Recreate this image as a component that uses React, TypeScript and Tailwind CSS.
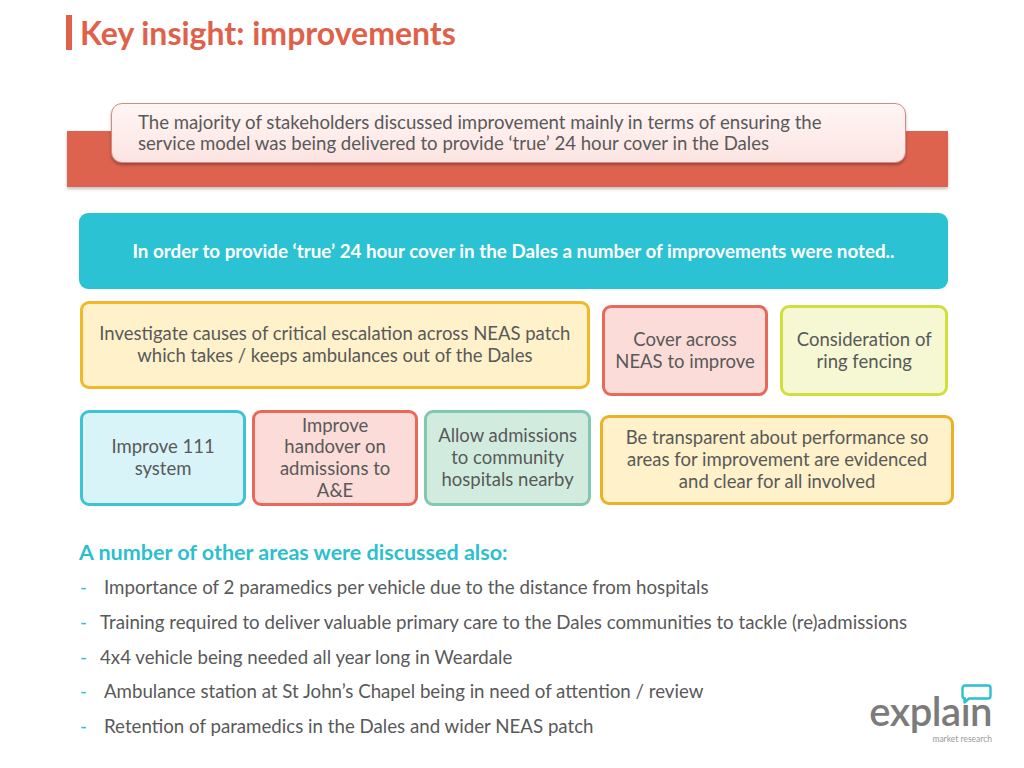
import React from 'react';

const FONT = { fontFamily: 'Lato, "Open Sans", "Liberation Sans", sans-serif' };

const BULLETS = [
    { text: 'Importance of 2 paramedics per vehicle due to the distance from hospitals', pad: 'pl-[24px]' },
    { text: 'Training required to deliver valuable primary care to the Dales communities to tackle (re)admissions', pad: 'pl-[20px]' },
    { text: '4x4 vehicle being needed all year long in Weardale', pad: 'pl-[20px]' },
    { text: 'Ambulance station at St John\u2019s Chapel being in need of attention / review', pad: 'pl-[24px]' },
    { text: 'Retention of paramedics in the Dales and wider NEAS patch', pad: 'pl-[24px]' },
];

function Box({ className, children }: Readonly<{ className: string; children: React.ReactNode }>) {
    return (
        <div
            className={`flex items-center justify-center rounded-[9px] border-[3px] px-1 text-center text-[18.5px] leading-[21.7px] text-[#595959] ${className}`}
        >
            {children}
        </div>
    );
}

function Logo() {
    return (
        <div className="flex flex-col items-end">
            <div className="relative">
                {/* the speech bubble stands in for the dot of the i */}
                <span className="text-[40px] font-semibold leading-[40px] tracking-[-0.5px] text-[#7b7b7b]">expla{'\u0131'}n</span>
                <svg
                    className="absolute right-[0px] top-[-7px]"
                    width="31"
                    height="20"
                    viewBox="0 0 31 20"
                    fill="none"
                    aria-hidden
                >
                    <path
                        d="M4 1.5 H27 a2.5 2.5 0 0 1 2.5 2.5 V12 a2.5 2.5 0 0 1 -2.5 2.5 H8 L3.5 18.5 V14.5 H4 a2.5 2.5 0 0 1 -2.5 -2.5 V4 a2.5 2.5 0 0 1 2.5 -2.5 Z"
                        stroke="#2bbfcf"
                        strokeWidth="2.4"
                        strokeLinejoin="round"
                    />
                </svg>
            </div>
            <span className="mt-[3px] text-[8.5px] leading-[9px] text-[#9a9a9a]">market research</span>
        </div>
    );
}

export default function App() {
    return (
        <div className="relative h-[768px] w-[1024px] overflow-hidden bg-white" style={FONT}>
            <header className="flex items-center gap-[8px] pl-[66px] pt-[15px]">
                <span className="h-[35px] w-[6px] bg-[#e0614a]" />
                <h1 className="text-[32px] font-bold leading-[35px] text-[#e0614a]">Key insight: improvements</h1>
            </header>

            <section className="mt-[53px] grid pl-[67px] pr-[76px]">
                <div className="col-start-1 row-start-1 mt-[28px] h-[56px] bg-[#dd634f] shadow-[0_2px_3px_rgba(0,0,0,0.25)]" />
                <div className="col-start-1 row-start-1 ml-[44px] mr-[42px] h-[60px] rounded-[11px] border border-[#d88a80] bg-gradient-to-b from-[#fff6f5] to-[#fbe4e1] pl-[26px] pt-[8px] text-[18.6px] leading-[21px] text-[#595959] shadow-[0_2px_3px_rgba(0,0,0,0.3)]">
                    <p>The majority of stakeholders discussed improvement mainly in terms of ensuring the</p>
                    <p>service model was being delivered to provide {'\u2018'}true{'\u2019'} 24 hour cover in the Dales</p>
                </div>
            </section>

            <section className="ml-[79px] mr-[76px] mt-[26px] flex h-[76px] items-center justify-center rounded-[9px] bg-[#2bc2d4] text-[18.8px] font-bold text-white">
                In order to provide {'\u2018'}true{'\u2019'} 24 hour cover in the Dales a number of improvements were noted..
            </section>

            <section className="ml-[80px] mr-[76px] mt-[12px] flex items-start gap-[12px]">
                <Box className="h-[88px] w-[511px] items-start pt-[19px] border-[#f1b92a] bg-[#fff1ca]">
                    Investigate causes of critical escalation across NEAS patch
                    <br />
                    which takes / keeps ambulances out of the Dales
                </Box>
                <Box className="mt-[4px] h-[91px] w-[167px] border-[#e8685a] bg-[#fbdcd8]">
                    Cover across
                    <br />
                    NEAS to improve
                </Box>
                <Box className="mt-[4px] h-[91px] w-[168px] border-[#cfe03e] bg-[#f5f8d3]">
                    Consideration of
                    <br />
                    ring fencing
                </Box>
            </section>

            <section className="ml-[80px] mr-[70px] mt-[14px] flex items-start gap-[6px]">
                <Box className="h-[96px] w-[167px] border-[#3ec3d6] bg-[#d8f4f9]">
                    Improve 111
                    <br />
                    system
                </Box>
                <Box className="h-[96px] w-[167px] border-[#e8685a] bg-[#fbdcd8]">
                    Improve
                    <br />
                    handover on
                    <br />
                    admissions to
                    <br />
                    A&amp;E
                </Box>
                <Box className="h-[96px] w-[168px] border-[#82c8b0] bg-[#d1ecdf]">
                    Allow admissions
                    <br />
                    to community
                    <br />
                    hospitals nearby
                </Box>
                <Box className="ml-[3px] mt-[5px] h-[90px] w-[356px] border-[#ebb128] bg-[#fff1ca]">
                    Be transparent about performance so
                    <br />
                    areas for improvement are evidenced
                    <br />
                    and clear for all involved
                </Box>
            </section>

            <section className="ml-[79px] mt-[33px]">
                <h2 className="text-[21.5px] font-bold leading-[26px] text-[#2bbfcf]">A number of other areas were discussed also:</h2>
                <ul className="mt-[11px] flex flex-col gap-[11.75px]">
                    {BULLETS.map((b) => (
                        <li key={b.text} className="flex text-[18.7px] leading-[23px] text-[#595959]">
                            <span className="w-0 pl-[1px] text-[#2bbfcf]">-</span>
                            <span className={b.pad}>{b.text}</span>
                        </li>
                    ))}
                </ul>
            </section>

            <div className="absolute bottom-[24px] right-[32px]">
                <Logo />
            </div>
        </div>
    );
}
